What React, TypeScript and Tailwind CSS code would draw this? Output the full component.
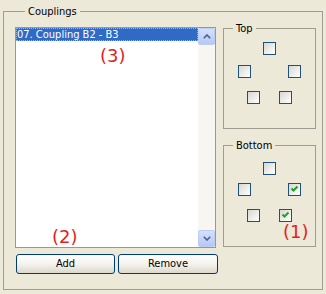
function Check({ checked = false }: { checked?: boolean }) {
    return (
        <span className="block w-[13px] h-[13px] border border-[#1c5180] bg-linear-to-br from-[#d8d8d0] to-white">
            {checked && (
                <svg width="11" height="11" viewBox="0 0 11 11" className="block">
                    <path d="M2.5 4.5 L4.5 6.5 L8.5 2.5" stroke="#21a121" strokeWidth="2" fill="none" />
                </svg>
            )}
        </span>
    );
}

function Group({ title, className, children }: { title: string; className?: string; children?: React.ReactNode }) {
    return (
        <fieldset className={`border border-[#9d9d92] ${className ?? ''}`}>
            <legend className="ml-[9px] px-[3px] leading-[13px]">{title}</legend>
            {children}
        </fieldset>
    );
}

function Arrow({ up }: { up?: boolean }) {
    return (
        <div className="h-[17px] flex items-center justify-center rounded-[2px] border border-[#bccdf5] bg-linear-to-b from-[#d4e0fd] to-[#b6c9f5]">
            <svg width="8" height="5" viewBox="0 0 8 5" className={up ? '' : 'rotate-180'}>
                <path d="M0.8 4.2 L4 1 L7.2 4.2" stroke="#4d6185" strokeWidth="1.6" fill="none" />
            </svg>
        </div>
    );
}

function Button({ label, w }: { label: string; w: string }) {
    return (
        <div
            className={`${w} h-[20px] flex items-center justify-center rounded-[3px] border border-[#003c74] bg-linear-to-b from-white via-[#f4f3ee] to-[#dcd8cc] text-black`}
        >
            {label}
        </div>
    );
}

function Row({ gap, mt, children }: { gap: string; mt: string; children: React.ReactNode }) {
    return <div className={`flex justify-center ${gap} ${mt}`}>{children}</div>;
}

export default function App() {
    return (
        <div className="relative w-[326px] h-[294px] bg-[#ece9d8] text-[11px] text-black font-['DejaVu_Sans_Condensed','Liberation_Sans',sans-serif] pt-[5px] pl-[3px]">
            <fieldset className="w-[320px] h-[285px] border border-[#9d9d92] pl-[11px] pt-[4px]">
                <legend className="ml-[10px] px-[3px] leading-[13px]">Couplings</legend>
                <div className="flex gap-[5px]">
                    <div className="w-[203px] pt-[5px] flex flex-col">
                        <div className="w-[201px] h-[221px] border border-[#7f9db9] bg-white flex">
                            <div className="flex-1">
                                <div className="h-[13px] leading-[13px] bg-[#316ac5] text-white pl-[1px] outline outline-dotted outline-[#9ab3e0] -outline-offset-1">
                                    07. Coupling B2 - B3
                                </div>
                            </div>
                            <div className="w-[17px] flex flex-col bg-[#f7f6f1]">
                                <Arrow up />
                                <div className="flex-1" />
                                <Arrow />
                            </div>
                        </div>
                        <div className="flex gap-[3px] mt-[6px] ml-[1px]">
                            <Button label="Add" w="w-[99px]" />
                            <Button label="Remove" w="w-[100px]" />
                        </div>
                    </div>
                    <div className="w-[93px] flex flex-col">
                        <Group title="Top" className="h-[107px]">
                            <Row gap="gap-0" mt="mt-[7px]">
                                <Check />
                            </Row>
                            <Row gap="gap-[37px]" mt="mt-[10px]">
                                <Check />
                                <Check />
                            </Row>
                            <Row gap="gap-[19px]" mt="mt-[13px]">
                                <Check />
                                <Check />
                            </Row>
                        </Group>
                        <Group title="Bottom" className="h-[108px] mt-[10px]">
                            <Row gap="gap-0" mt="mt-[10px]">
                                <Check />
                            </Row>
                            <Row gap="gap-[37px]" mt="mt-[8px]">
                                <Check />
                                <Check checked />
                            </Row>
                            <Row gap="gap-[19px]" mt="mt-[13px]">
                                <Check />
                                <Check checked />
                            </Row>
                        </Group>
                    </div>
                </div>
            </fieldset>

            <span className="absolute left-[100px] top-[47px] text-[18px] leading-[18px] text-[#e41e1e] font-['DejaVu_Sans',sans-serif]">(3)</span>
            <span className="absolute left-[52px] top-[228px] text-[18px] leading-[18px] text-[#e41e1e] font-['DejaVu_Sans',sans-serif]">(2)</span>
            <span className="absolute left-[283px] top-[223px] text-[18px] leading-[18px] text-[#e41e1e] font-['DejaVu_Sans',sans-serif]">(1)</span>
        </div>
    );
}
